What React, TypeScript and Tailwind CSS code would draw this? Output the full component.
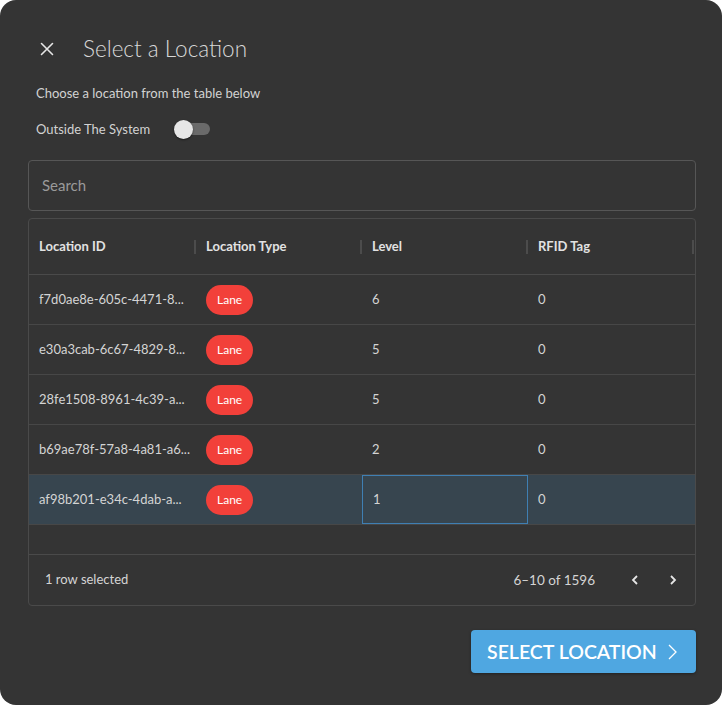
import React from "react";

const rows = [
  { id: "f7d0ae8e-605c-4471-8...", level: "6", rfid: "0" },
  { id: "e30a3cab-6c67-4829-8...", level: "5", rfid: "0" },
  { id: "28fe1508-8961-4c39-a...", level: "5", rfid: "0" },
  { id: "b69ae78f-57a8-4a81-a6...", level: "2", rfid: "0" },
  { id: "af98b201-e34c-4dab-a...", level: "1", rfid: "0", selected: true },
];

function HeaderCell({ label }: { label: string }) {
  return (
    <div className="relative flex items-center pl-[10px] text-[13px] font-bold text-[#e2e2e2]">
      <span>{label}</span>
      <span className="absolute right-[0px] top-1/2 -translate-y-1/2 h-[14px] w-[2px] bg-[#4c4c4c]" />
    </div>
  );
}

export default function App() {
  return (
    <div className="w-[722px] h-[705px] bg-white" style={{ fontFamily: "Lato, 'Noto Sans', sans-serif" }}>
      <div className="w-full h-full rounded-[16px] bg-[#343434] flex flex-col pl-[28px] pr-[26px]">
        {/* Header */}
        <div className="flex items-center h-[28px] mt-[35px] pl-[12px]">
          <svg width="14" height="14" viewBox="0 0 14 14" className="shrink-0">
            <path d="M1.5 1.5 L12.5 12.5 M12.5 1.5 L1.5 12.5" stroke="#e6e6e6" strokeWidth="1.6" strokeLinecap="round" />
          </svg>
          <h1 className="ml-[29px] text-[22.5px] font-light text-[#d8d8d8] leading-[28px]">Select a Location</h1>
        </div>
        <p className="mt-[22px] pl-[8px] text-[13px] text-[#d2d2d2] leading-[16px]">Choose a location from the table below</p>
        <div className="mt-[18px] pl-[8px] flex items-center h-[20px]">
          <span className="text-[13px] text-[#d2d2d2] leading-[16px]">Outside The System</span>
          <div className="relative ml-[24px] w-[36px] h-[20px] flex items-center">
            <div className="absolute left-[4px] w-[32px] h-[12px] rounded-full bg-[#6a6a6a]" />
            <div className="absolute left-0 w-[19px] h-[19px] rounded-full bg-[#e6e6e6] shadow-[0_1px_2px_rgba(0,0,0,0.5)]" />
          </div>
        </div>
        {/* Search */}
        <div className="mt-[21px] h-[51px] rounded-[4px] border border-[#565656] flex items-center pl-[13px]">
          <span className="text-[15px] text-[#9a9a9a]">Search</span>
        </div>
        {/* Table */}
        <div className="mt-[7px] h-[388px] rounded-[4px] border border-[#4a4a4a] flex flex-col">
          <div className="h-[56px] border-b border-[#4a4a4a] grid grid-cols-[167px_166px_166px_166px]">
            <HeaderCell label="Location ID" />
            <HeaderCell label="Location Type" />
            <HeaderCell label="Level" />
            <HeaderCell label="RFID Tag" />
          </div>
          {rows.map((r) => (
            <div
              key={r.id}
              className={`h-[50px] border-b border-[#474747] grid grid-cols-[167px_166px_166px_166px] text-[13px] text-[#d4d4d4] ${r.selected ? "bg-[#37454f]" : ""}`}
            >
              <div className="flex items-center pl-[10px]">{r.id}</div>
              <div className="flex items-center pl-[10px]">
                <span className="h-[30px] px-[11px] rounded-full bg-[#f2403a] text-white text-[12px] flex items-center">Lane</span>
              </div>
              <div className={`flex items-center pl-[10px] ${r.selected ? "border-[1.5px] border-[#3f7fb3]" : ""}`}>{r.level}</div>
              <div className="flex items-center pl-[10px]">{r.rfid}</div>
            </div>
          ))}
          <div className="flex-1" />
          <div className="h-[51px] border-t border-[#4a4a4a] flex items-center pl-[16px] pr-[16px] text-[13px] text-[#d4d4d4]">
            <span>1 row selected</span>
            <span className="ml-auto text-[13.5px]">6–10 of 1596</span>
            <svg width="12" height="12" viewBox="0 0 12 12" className="ml-[34px]">
              <path d="M8 2 L4 6 L8 10" stroke="#e6e6e6" strokeWidth="1.8" fill="none" />
            </svg>
            <svg width="12" height="12" viewBox="0 0 12 12" className="ml-[26px]">
              <path d="M4 2 L8 6 L4 10" stroke="#e6e6e6" strokeWidth="1.8" fill="none" />
            </svg>
          </div>
        </div>
        {/* Button */}
        <div className="mt-[24px] flex justify-end">
          <button className="w-[225px] h-[43px] rounded-[4px] bg-[#4fa7e1] flex items-center pl-[16px] text-white text-[19.5px] font-semibold shadow-[0_1px_3px_rgba(0,0,0,0.35)]">
            <span>SELECT LOCATION</span>
            <svg width="12" height="20" viewBox="0 0 12 20" className="ml-[10px]">
              <path d="M2 3 L9 10 L2 17" stroke="#ffffff" strokeWidth="1.3" fill="none" />
            </svg>
          </button>
        </div>
      </div>
    </div>
  );
}
